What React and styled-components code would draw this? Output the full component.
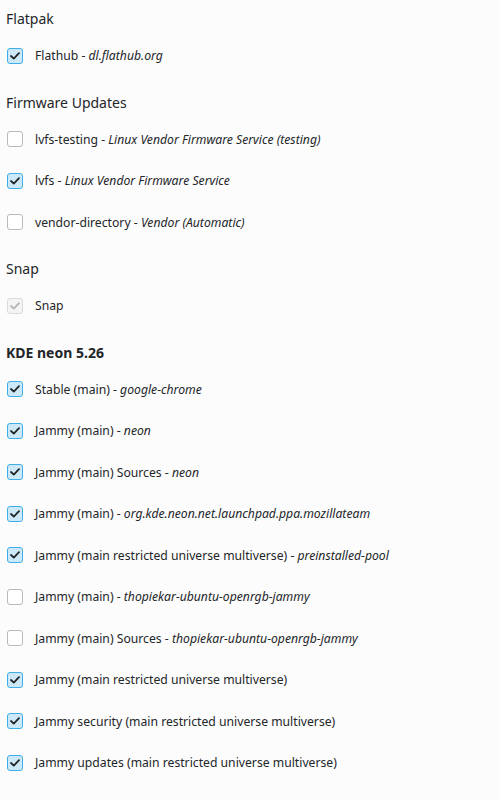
import React from 'react';
import styled, { createGlobalStyle } from 'styled-components';

const GlobalStyle = createGlobalStyle`
  html, body {
    margin: 0;
    padding: 0;
    background: #fcfcfc;
  }
  body {
    font-family: "Noto Sans", "Open Sans", sans-serif;
    color: #232629;
  }
`;

const Page = styled.div`
  display: flex;
  flex-direction: column;
  gap: 10px;
  padding: 3px 0 0 0;
  width: 500px;
  min-height: 800px;
  box-sizing: border-box;
  background: #fcfcfc;
`;

const Section = styled.section`
  display: flex;
  flex-direction: column;
`;

const Heading = styled.h2`
  margin: 0;
  height: 32px;
  box-sizing: border-box;
  padding: 6px 0 4px 6px;
  font-size: 14px;
  line-height: 20px;
  font-weight: ${p => (p.$bold ? 700 : 400)};
  color: #232629;
`;

const Row = styled.label`
  display: flex;
  align-items: center;
  gap: 12px;
  height: 41.5px;
  padding-left: 7px;
  font-size: 12.2px;
  color: #232629;
`;

const Box = styled.span`
  display: flex;
  align-items: center;
  justify-content: center;
  width: 16px;
  height: 16px;
  box-sizing: border-box;
  border-radius: 3px;
  border: 1px solid ${p => (p.$disabled ? '#d9dadb' : p.$checked ? '#3daee9' : '#b9babb')};
  background: ${p => (p.$disabled ? '#f4f4f4' : p.$checked ? '#cde8f7' : '#ffffff')};
  color: ${p => (p.$disabled ? '#b4b5b6' : '#232629')};
  flex-shrink: 0;
`;

const Detail = styled.em`
  font-style: italic;
`;

function Check({ checked, disabled }) {
  return (
    <Box $checked={checked} $disabled={disabled}>
      {checked && (
        <svg width="10" height="8" viewBox="0 0 10 8" fill="none">
          <path d="M1 4 L3.8 6.6 L9 1.2" stroke="currentColor" strokeWidth="1.8" strokeLinecap="round" strokeLinejoin="round" />
        </svg>
      )}
    </Box>
  );
}

const sections = [
  {
    title: 'Flatpak',
    items: [{ name: 'Flathub', detail: 'dl.flathub.org', checked: true }],
  },
  {
    title: 'Firmware Updates',
    items: [
      { name: 'lvfs-testing', detail: 'Linux Vendor Firmware Service (testing)', checked: false },
      { name: 'lvfs', detail: 'Linux Vendor Firmware Service', checked: true },
      { name: 'vendor-directory', detail: 'Vendor (Automatic)', checked: false },
    ],
  },
  {
    title: 'Snap',
    items: [{ name: 'Snap', checked: true, disabled: true }],
  },
  {
    title: 'KDE neon 5.26',
    bold: true,
    items: [
      { name: 'Stable (main)', detail: 'google-chrome', checked: true },
      { name: 'Jammy (main)', detail: 'neon', checked: true },
      { name: 'Jammy (main) Sources', detail: 'neon', checked: true },
      { name: 'Jammy (main)', detail: 'org.kde.neon.net.launchpad.ppa.mozillateam', checked: true },
      { name: 'Jammy (main restricted universe multiverse)', detail: 'preinstalled-pool', checked: true },
      { name: 'Jammy (main)', detail: 'thopiekar-ubuntu-openrgb-jammy', checked: false },
      { name: 'Jammy (main) Sources', detail: 'thopiekar-ubuntu-openrgb-jammy', checked: false },
      { name: 'Jammy (main restricted universe multiverse)', checked: true },
      { name: 'Jammy security (main restricted universe multiverse)', checked: true },
      { name: 'Jammy updates (main restricted universe multiverse)', checked: true },
    ],
  },
];

export default function App() {
  return (
    <>
      <GlobalStyle />
      <Page>
        {sections.map(section => (
          <Section key={section.title}>
            <Heading $bold={section.bold}>{section.title}</Heading>
            {section.items.map((item, i) => (
              <Row key={i}>
                <Check checked={item.checked} disabled={item.disabled} />
                <span>
                  {item.name}
                  {item.detail && (
                    <>
                      {' - '}
                      <Detail>{item.detail}</Detail>
                    </>
                  )}
                </span>
              </Row>
            ))}
          </Section>
        ))}
      </Page>
    </>
  );
}
